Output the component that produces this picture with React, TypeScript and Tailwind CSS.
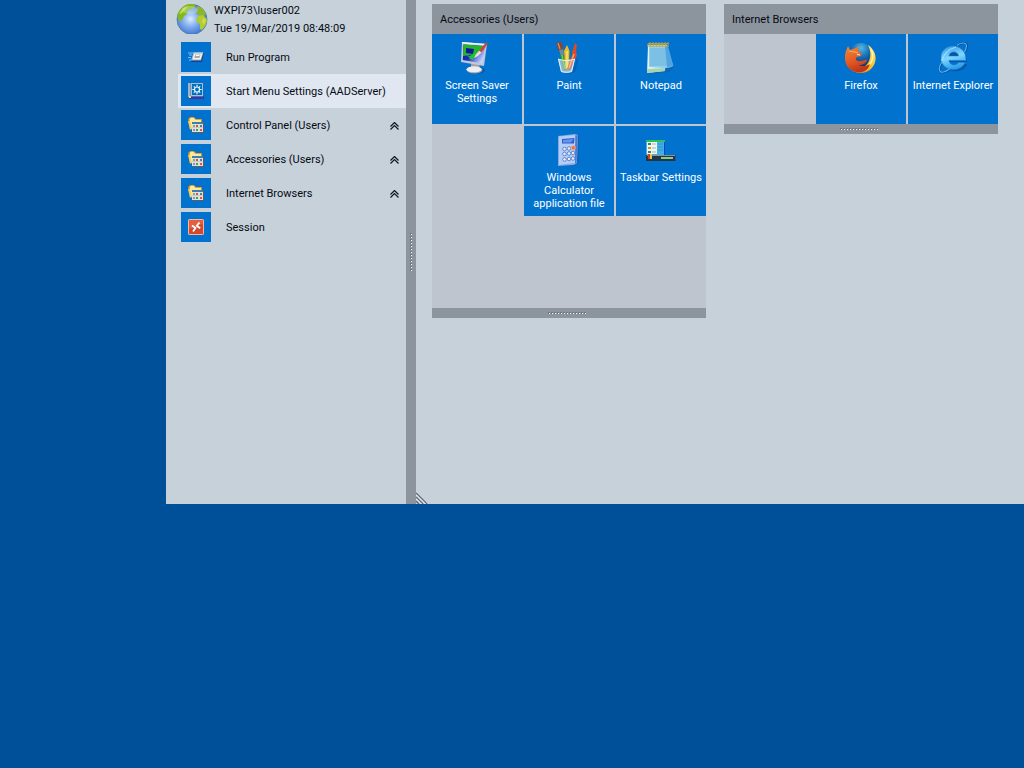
import type { ReactNode } from "react";

function Globe() {
  return (
    <svg viewBox="0 0 32 32" className="size-8" aria-hidden="true">
      <defs>
        <radialGradient id="sea" cx="45%" cy="48%" r="55%">
          <stop offset="0" stopColor="#dcecfc" />
          <stop offset="0.45" stopColor="#86b2ee" />
          <stop offset="1" stopColor="#3f72cf" />
        </radialGradient>
      </defs>
      <circle cx="16" cy="17.500" r="15" fill="url(#sea)" stroke="#4577bd" strokeWidth="0.800" />
      <path d="M1.500 14C2 8 7 3 13 2l6 0 0 3-3 2-4 1-1 4-3 2-2 4-2 2-2-3z" fill="#86b81e" />
      <path d="M3 11l4-5 5-2-3 4-4 4z" fill="#b5d64a" />
      <path d="M21 4c5 1 8 4 9 9l-3 1-4-1-3-2 1-4z" fill="#8db52a" />
      <path d="M22 14l5-1 4 4c0 4-2 8-5 11l-2-1 0-5-4-3z" fill="#b2cc2e" />
      <path d="M27 16l3 2-2 5-2-3z" fill="#d3d944" />
      <ellipse cx="14" cy="8" rx="8" ry="4" fill="#fff" opacity="0.25" />
    </svg>
  );
}

function RunIcon() {
  return (
    <svg viewBox="0 0 16 16" className="size-4" aria-hidden="true">
      <path d="M0 4h5M1 6h3M0 8.500h3M1 11h2" stroke="#86bdf0" />
      <path d="M5.500 3h10.500l-2 10H3z" fill="#1b3f82" />
      <path d="M5.500 3h10l-2.500 8.500H3z" fill="#8fb5df" />
      <path d="M6 4.500h8.500l-2 6H4.500z" fill="#f6f4e8" />
      <path d="M7.500 5.500h5L11.500 9H6.200z" fill="#aaa99f" />
      <path d="M8 6.500h3.500" stroke="#fff" />
    </svg>
  );
}

function SettingsIcon() {
  return (
    <svg viewBox="0 0 16 16" className="size-4" aria-hidden="true">
      <path d="M0 0h3v14H0z" fill="#7697b6" />
      <path d="M1 0v14" stroke="#bed4e4" />
      <path d="M3 0h12v13H3z" fill="#a9c1d5" />
      <path d="M4 1h10v11H4z" fill="#0070bd" />
      <circle cx="9" cy="6.500" r="2.500" fill="none" stroke="#e7f4fb" strokeWidth="1.200" />
      <path d="M9 1.800v2M9 9.200v2M4.300 6.500h2M11.700 6.500h2M5.800 3.300l1.400 1.400M12.200 3.300l-1.400 1.400M5.800 9.700l1.400-1.400M12.200 9.700l-1.400-1.400" stroke="#e7f4fb" strokeWidth="1.200" />
      <path d="M1 13h15v3H1z" fill="#343b9d" />
      <path d="M1 13h2v2H1z" fill="#f4d86c" />
      <path d="M3 13.500h12" stroke="#6164b9" />
    </svg>
  );
}

function FolderIcon() {
  return (
    <svg viewBox="0 0 16 16" className="size-4" aria-hidden="true">
      <path d="M0 2l2-2h4l2 2h6v9H4l-2 2z" fill="#c98f22" />
      <path d="M1.500 2L3 .8h2.500l2 2H13V7H4v5l-1 0z" fill="#ffe99b" />
      <path d="M0 4h2l2 8-2 .5z" fill="#f8cd62" />
      <path d="M4 5h12v11H4z" fill="#5b5e5c" />
      <path d="M4 5h11v2H4z" fill="#3e7fad" />
      <path d="M4 7h11v8H4z" fill="#e3e1d4" />
      <path d="M5 8h2v2H5z" fill="#87af78" />
      <path d="M8 8h2v2H8z" fill="#cf5544" />
      <path d="M12 8h2v2h-2z" fill="#477eb1" />
      <path d="M5 12h2v2H5z" fill="#9a8bd0" />
      <path d="M8 12h2v2H8z" fill="#26a778" />
      <path d="M12 12h2v2h-2z" fill="#d8564b" />
      <path d="M4 10.500h11" stroke="#c4cccc" />
    </svg>
  );
}

function SessionIcon() {
  return (
    <svg viewBox="0 0 16 16" className="size-4" aria-hidden="true">
      <rect x="0.500" y="0.500" width="15" height="15" rx="0.600" fill="#d5482b" stroke="#f3b7a7" />
      <path d="M1 1h14v4C9 6 5 9 1 10z" fill="#e0603f" />
      <path d="M4 6.500l3.500 2.500L5 12.500M11.500 3.500L8.800 6.800l3.400 2.500" fill="none" stroke="#fff" strokeWidth="1.800" />
    </svg>
  );
}

function ScreenSaverIcon() {
  return (
    <svg viewBox="0 0 32 32" className="size-8" aria-hidden="true">
      <defs>
        <linearGradient id="screen" x1="0" y1="0" x2="1" y2="0.6">
          <stop offset="0" stopColor="#101d97" />
          <stop offset="0.5" stopColor="#1a2bc4" />
          <stop offset="1" stopColor="#c3d0ff" />
        </linearGradient>
      </defs>
      <ellipse cx="15" cy="28.500" rx="9" ry="3.500" fill="#0c4d98" opacity="0.6" />
      <path d="M10 20l8 1.500 1 5-9 0z" fill="#9ea5ae" />
      <ellipse cx="13.500" cy="28" rx="8" ry="3.500" fill="#9aa1aa" />
      <ellipse cx="13" cy="27.300" rx="7.500" ry="3" fill="#eceef1" />
      <path d="M1 0l25 2-3 22L0 20z" fill="#c4c9d0" />
      <path d="M1 0l25 2-.3 1.500L1 1.500z" fill="#f3f4f5" />
      <path d="M2.500 2.500L24 4l-2.500 17.500L1.800 18z" fill="url(#screen)" />
      <path d="M2.500 2.500L22 4c-2 5-5 7-8 8l-12 2z" fill="#24b52f" />
      <path d="M5 6l8 1-1 5-7-1z" fill="#10179b" />
      <path d="M5 13l4 1 4-3 3 1-2 4-2 0 0 2-3-1-1-2z" fill="#1fc232" />
      <path d="M13 16l2-4 5-5 2 2-5 5z" fill="#e8ddd4" />
      <path d="M18 8.500L25 .5l2 1-6.500 9z" fill="#c64a38" />
    </svg>
  );
}

function PaintIcon() {
  return (
    <svg viewBox="0 0 32 32" className="size-8" aria-hidden="true">
      <path d="M8 29h12l4-13 1 4-3 10-6 2z" fill="#07509f" opacity="0.5" />
      <path d="M5 17h17l-3 13c-3 1-8 1-11 0z" fill="#8eb1c3" opacity="0.7" />
      <path d="M6 8l4 0 4 20-3 0z" fill="#2f9a3f" />
      <path d="M8 9l4 18" stroke="#84c247" strokeWidth="1.300" />
      <path d="M3 0l3 1 3-1 1 8-4 2z" fill="#92412a" />
      <path d="M5 1l2 6" stroke="#da8f50" strokeWidth="1.300" />
      <path d="M6 8l4-1 1 5-3 1z" fill="#6d87ad" />
      <path d="M11 9l3-6 2.500 6-1 18h-3z" fill="#efbb1f" />
      <path d="M14 9l0 17" stroke="#ffea72" strokeWidth="1.300" />
      <path d="M19 10l3-9 2 2-1 6 1 4-7 15-3-1 5-14z" fill="#dc4a29" />
      <path d="M21 12l-5 14" stroke="#ff9b62" strokeWidth="1.500" />
      <path d="M5 17c5 2 12 2 17 0l-3 13c-3 1-8 1-11 0z" fill="#dff7ff" opacity="0.3" />
      <path d="M5 17c5 2 12 2 17 0M5.500 17l3 12.500c3 1 7 1 10 0L21.500 17" fill="none" stroke="#e4f4f8" />
    </svg>
  );
}

function NotepadIcon() {
  return (
    <svg viewBox="0 0 32 32" className="size-8" aria-hidden="true">
      <path d="M3 3h20l6 22-5 5-20 2z" fill="#165aa3" opacity="0.5" />
      <path d="M3 3h19l-2 26-18 2z" fill="#dff3ea" />
      <path d="M2 27l18-1v3L2 31z" fill="#a8d3ac" />
      <path d="M4 4h18l6 20c-3 2-7 2-11 2L4 25z" fill="#8fcff0" />
      <path d="M20 4h3l5.500 20-6.500 1.500z" fill="#4fa5e3" />
      <path d="M5 7h17M5 9h18M5 11h18M5 13h19M5 15h19M5 17h20M5 19h21M5 21h21M5 23h22" stroke="#5da5d2" strokeWidth="0.700" />
      <path d="M3 5V2l2-1v4m1 0V2l2-1v4m1 0V2l2-1v4m1 0V2l2-1v4m1 0V2l2-1v4m1 0V2l2-1v4m1 0V2l2-1v4" fill="none" stroke="#c2a943" strokeWidth="1.100" />
    </svg>
  );
}

function CalculatorIcon() {
  return (
    <svg viewBox="0 0 32 32" className="size-8" aria-hidden="true">
      <path d="M8 4l18-3 0 27-5 4H7z" fill="#0b58b0" opacity="0.6" />
      <path d="M5 2l17-2 3 1-1 28-3 2-16 1z" fill="#86a9e2" />
      <path d="M6 2.500L22 1l0 28-16 2z" fill="#b4cdf6" />
      <path d="M22.500 1l2 .5-1 27-1.500 1z" fill="#4b78c9" />
      <path d="M9 5l12.500-1-.5 5.500H9z" fill="#2f5fca" />
      <path d="M10 6l10.500-1-2.500 3.500h-8z" fill="#6496ea" />
      <g fill="#e6effd" stroke="#5f85cb">
        <circle cx="11.500" cy="15" r="1.800" />
        <circle cx="16" cy="14.500" r="1.800" />
        <circle cx="11.500" cy="20" r="1.800" />
        <circle cx="16" cy="19.500" r="1.800" />
        <circle cx="20" cy="19" r="1.800" />
        <circle cx="11.500" cy="25.500" r="1.800" />
        <circle cx="16" cy="25" r="1.800" />
        <circle cx="20" cy="24.500" r="1.800" />
      </g>
      <circle cx="20.300" cy="13.800" r="2" fill="#ee7140" stroke="#e8a68c" />
    </svg>
  );
}

function TaskbarIcon() {
  return (
    <svg viewBox="0 0 32 32" className="size-8" aria-hidden="true">
      <path d="M1 6h19v17H1z" fill="#43afe3" />
      <path d="M1 6h19v2H1z" fill="#2ac253" />
      <path d="M19.500 8v14" stroke="#1146c3" />
      <path d="M2 8h10v12H2z" fill="#eef7ef" />
      <path d="M3 10h3M3 18h3" stroke="#3e7888" strokeWidth="2" />
      <path d="M3 14h3" stroke="#df902e" strokeWidth="2" />
      <path d="M7 10h4M7 14h4M7 18h4" stroke="#a9b7bc" />
      <path d="M13 10h5M13 13h5M13 16h5" stroke="#2f93d6" />
      <path d="M1 21h29l1 1v4l-1 1H1z" fill="#263640" />
      <path d="M2 21.500h28" stroke="#7f959b" />
      <path d="M16 23h12v2H16z" fill="#8ccb85" />
      <path d="M4 20v5" stroke="#d43d26" strokeWidth="2" />
      <path d="M6 20v5" stroke="#e9c73d" strokeWidth="2" />
      <path d="M30.500 22v4" stroke="#4a3bbf" />
    </svg>
  );
}

function FirefoxIcon() {
  return (
    <svg viewBox="0 0 32 32" className="size-8" aria-hidden="true">
      <defs>
        <radialGradient id="fxGlobe" cx="50%" cy="20%" r="75%">
          <stop offset="0" stopColor="#52b8e8" />
          <stop offset="0.45" stopColor="#1670b5" />
          <stop offset="1" stopColor="#0b256b" />
        </radialGradient>
        <linearGradient id="fxFlame" x1="0" y1="0" x2="0.400" y2="1">
          <stop offset="0" stopColor="#f08a38" />
          <stop offset="0.6" stopColor="#e55922" />
          <stop offset="1" stopColor="#bd371a" />
        </linearGradient>
        <linearGradient id="fxTail" x1="1" y1="0" x2="0" y2="1">
          <stop offset="0" stopColor="#fff18b" />
          <stop offset="0.5" stopColor="#f8b924" />
          <stop offset="1" stopColor="#df521e" />
        </linearGradient>
      </defs>
      <circle cx="16" cy="14" r="13" fill="url(#fxGlobe)" />
      <path d="M23 3c9 6 10 17 3 24-6 6-17 5-22-1 9 2 17 0 20-7 2-5 2-10-1-16z" fill="url(#fxTail)" />
      <path d="M26 7c3 6 2 13-3 17" fill="none" stroke="#fff6aa" strokeWidth="1.500" />
      <path d="M3 4l2 4c2-1 5-1 9-4l-1 5 4 3-1 2-4 1c-3 2 0 5 4 4 3 0 4-2 6-1-1 4-5 5-8 5 3 2 8 1 11-1-2 7-8 9-13 8C1 29-2 18 1 9z" fill="url(#fxFlame)" />
      <path d="M4 9c3 1 6 0 9 2" fill="none" stroke="#f9a75c" strokeWidth="1.300" />
      <path d="M12 12.500l3 .5" stroke="#fff4df" strokeWidth="1.200" />
    </svg>
  );
}

function ExplorerIcon() {
  return (
    <svg viewBox="0 0 32 32" className="size-8" aria-hidden="true">
      <defs>
        <linearGradient id="ieBlue" x1="0" y1="0" x2="0.300" y2="1">
          <stop offset="0" stopColor="#2d95e6" />
          <stop offset="0.55" stopColor="#7fd6ff" />
          <stop offset="1" stopColor="#2b9fec" />
        </linearGradient>
      </defs>
      <path d="M30 20H13c1 5 8 5 9 2h8c-3 10-23 11-25-5C5 1 30 1 30 20z" fill="#063f84" opacity="0.550" />
      <path d="M20 4C24 0 30 0 30 4c0 2-1 4-2 6M5 21C1 27 2 31 7 30c2 0 4-1 6-2.500" fill="none" stroke="#0a4a95" strokeWidth="2" />
      <path
        d="M29 18.500H12c.5 5.500 8 5.500 9.500 2H28C25 30.500 4 31 4 15.500 4 0 29.500-.5 29 18.500zM12 14h9.500c-.5-5.500-9-5.500-9.500 0z"
        fill="url(#ieBlue)"
        stroke="#2377c3"
        strokeWidth="0.500"
      />
      <path d="M20 3.500C24 0 29.500 0 29.500 4c0 2-1 4-2 6M5 20C1 26 1.500 31 6.500 30c2-.5 4-1.500 6-3" fill="none" stroke="#5ab4ec" strokeWidth="1.100" />
      <path d="M4.500 19C7 11 12 7 19 5" fill="none" stroke="#a9e4ff" strokeWidth="1.200" opacity="0.800" />
    </svg>
  );
}

function DoubleChevron() {
  return (
    <svg viewBox="0 0 9 8" className="h-2 w-[9px]" fill="none" stroke="#101820" strokeWidth="1.200" aria-hidden="true">
      <path d="M0.500 4.500l4-4 4 4M0.500 7.500l4-4 4 4" />
    </svg>
  );
}

const dots = Array.from({ length: 13 }, (_, i) => i * 3);

function HorizontalGrip() {
  return (
    <svg viewBox="0 0 42 2" className="h-0.5 w-[42px]" shapeRendering="crispEdges" aria-hidden="true">
      {dots.map((p) => (
        <g key={p}>
          <rect x={p} y="0" width="2" height="2" fill="#707983" />
          <rect x={p + 1} y="1" width="1" height="1" fill="#fff" />
        </g>
      ))}
    </svg>
  );
}

function VerticalGrip() {
  return (
    <svg viewBox="0 0 2 38" className="h-[38px] w-0.5" shapeRendering="crispEdges" aria-hidden="true">
      {dots.map((p) => (
        <g key={p}>
          <rect x="0" y={p} width="2" height="2" fill="#707983" />
          <rect x="1" y={p + 1} width="1" height="1" fill="#fff" />
        </g>
      ))}
    </svg>
  );
}

type MenuItem = { label: string; icon: ReactNode; expandable?: boolean; active?: boolean };

const menu: MenuItem[] = [
  { label: "Run Program", icon: <RunIcon /> },
  { label: "Start Menu Settings (AADServer)", icon: <SettingsIcon />, active: true },
  { label: "Control Panel (Users)", icon: <FolderIcon />, expandable: true },
  { label: "Accessories (Users)", icon: <FolderIcon />, expandable: true },
  { label: "Internet Browsers", icon: <FolderIcon />, expandable: true },
  { label: "Session", icon: <SessionIcon /> },
];

function MenuRow({ label, icon, expandable, active }: MenuItem) {
  return (
    <button
      type="button"
      className={`flex h-[34px] w-full items-center pr-[7px] pl-[3px] text-left ${active ? "bg-[#e0e7f0]" : ""}`}
    >
      <span className="mr-[15px] flex size-[30px] shrink-0 items-center justify-center bg-[#0173cf]">{icon}</span>
      <span className="flex flex-1 items-center justify-between pt-0.5 whitespace-nowrap">
        {label}
        {expandable && <DoubleChevron />}
      </span>
    </button>
  );
}

function Tile({ label, icon }: { label: string; icon: ReactNode }) {
  return (
    <button
      type="button"
      className="flex size-[90px] flex-col items-center gap-[5px] bg-[#0173cf] pt-2 text-center leading-[13px] text-white"
    >
      {icon}
      <span>{label}</span>
    </button>
  );
}

function Empty() {
  return <div className="size-[90px]" />;
}

function Group({ title, children }: { title: string; children: ReactNode }) {
  return (
    <section className="bg-[#bfc5cf]">
      <h2 className="flex h-[30px] items-center bg-[#8c949d] px-2 pt-0.5">{title}</h2>
      <div className="grid grid-cols-[90px_90px_90px] gap-0.5">{children}</div>
      <footer className="flex h-2.5 items-center justify-center bg-[#8c949d]">
        <HorizontalGrip />
      </footer>
    </section>
  );
}

export default function App() {
  return (
    <div className="min-h-screen bg-[#005099] pl-[166px] font-['Roboto',sans-serif] text-[11px] text-[#050a14]">
      <main className="flex min-h-[504px] bg-[#c7d1da]">
        <aside className="w-60 shrink-0">
          <header className="flex h-10 gap-[6px] pt-0.5 pl-2.5">
            <Globe />
            <div className="leading-[18px] whitespace-nowrap">
              <p>WXPI73\luser002</p>
              <p>Tue 19/Mar/2019 08:48:09</p>
            </div>
          </header>
          <nav className="pl-3">
            {menu.map((item) => (
              <MenuRow key={item.label} {...item} />
            ))}
          </nav>
        </aside>
        <div className="flex w-2.5 shrink-0 items-center justify-center bg-[#8c949d]">
          <VerticalGrip />
        </div>
        <div className="flex flex-1 flex-col justify-between">
          <div className="flex flex-wrap items-start gap-[18px] pt-1 pl-4">
            <Group title="Accessories (Users)">
              <Tile label="Screen Saver Settings" icon={<ScreenSaverIcon />} />
              <Tile label="Paint" icon={<PaintIcon />} />
              <Tile label="Notepad" icon={<NotepadIcon />} />
              <Empty />
              <Tile label="Windows Calculator application file" icon={<CalculatorIcon />} />
              <Tile label="Taskbar Settings" icon={<TaskbarIcon />} />
              <Empty />
            </Group>
            <Group title="Internet Browsers">
              <Empty />
              <Tile label="Firefox" icon={<FirefoxIcon />} />
              <Tile label="Internet Explorer" icon={<ExplorerIcon />} />
            </Group>
          </div>
          <svg viewBox="0 0 12 12" className="size-3" fill="none" aria-hidden="true">
            <path d="M0 1l11 11M0 5l7 7M0 9l3 3" stroke="#616c78" strokeWidth="1.500" />
            <path d="M0 2.500l9.500 9.500M0 6.500l5.500 5.500" stroke="#f5f8fb" />
          </svg>
        </div>
      </main>
    </div>
  );
}
